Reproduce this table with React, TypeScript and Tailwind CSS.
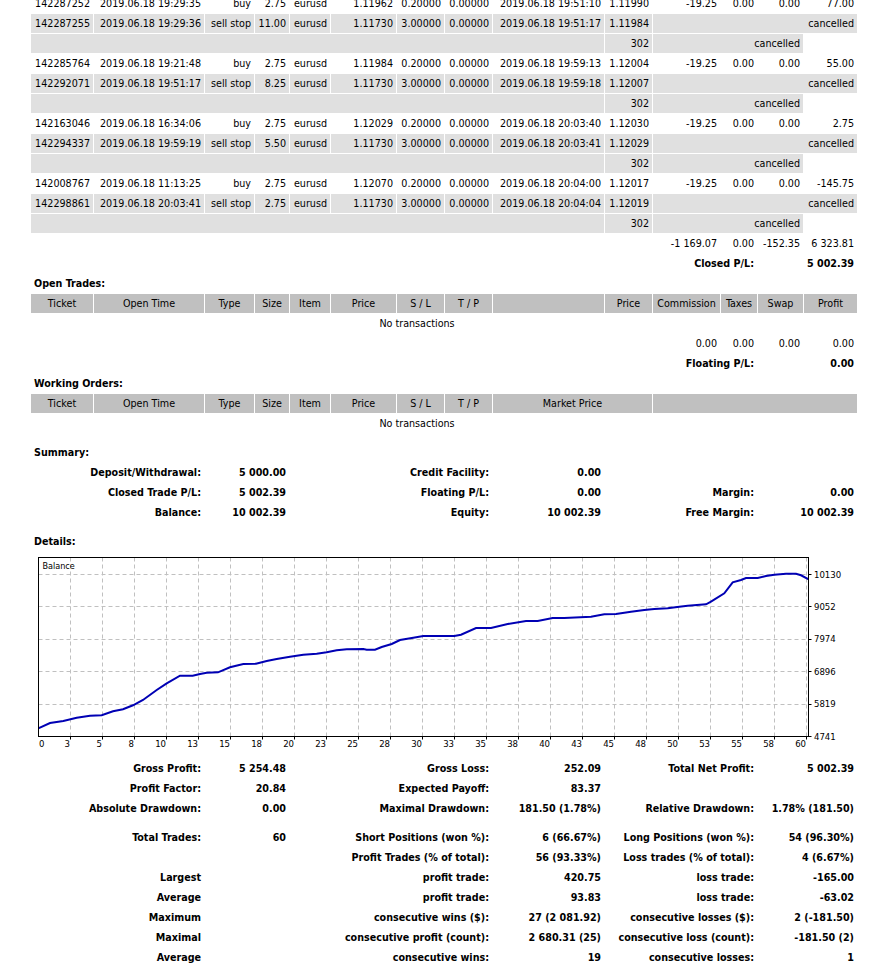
import React from "react"

const cols =
  "grid grid-cols-[62px_110px_49px_34px_40px_65px_47px_47px_111px_47px_67px_36px_45px_53px] gap-x-px h-[19px]"
const base = "px-[3px] whitespace-nowrap leading-[19px]"
const cell = `${base} text-right`
const mid = `${base} text-center`
const shade = "bg-[#E0E0E0]"
const head = `${mid} bg-[#C0C0C0]`

type Pair = {
  buy: string[]
  stop: string[]
}

const pairs: Pair[] = [
  {
    buy: ["142287252", "2019.06.18 19:29:35", "buy", "2.75", "eurusd", "1.11962", "0.20000", "0.00000", "2019.06.18 19:51:10", "1.11990", "-19.25", "0.00", "0.00", "77.00"],
    stop: ["142287255", "2019.06.18 19:29:36", "sell stop", "11.00", "eurusd", "1.11730", "3.00000", "0.00000", "2019.06.18 19:51:17", "1.11984"],
  },
  {
    buy: ["142285764", "2019.06.18 19:21:48", "buy", "2.75", "eurusd", "1.11984", "0.20000", "0.00000", "2019.06.18 19:59:13", "1.12004", "-19.25", "0.00", "0.00", "55.00"],
    stop: ["142292071", "2019.06.18 19:51:17", "sell stop", "8.25", "eurusd", "1.11730", "3.00000", "0.00000", "2019.06.18 19:59:18", "1.12007"],
  },
  {
    buy: ["142163046", "2019.06.18 16:34:06", "buy", "2.75", "eurusd", "1.12029", "0.20000", "0.00000", "2019.06.18 20:03:40", "1.12030", "-19.25", "0.00", "0.00", "2.75"],
    stop: ["142294337", "2019.06.18 19:59:19", "sell stop", "5.50", "eurusd", "1.11730", "3.00000", "0.00000", "2019.06.18 20:03:41", "1.12029"],
  },
  {
    buy: ["142008767", "2019.06.18 11:13:25", "buy", "2.75", "eurusd", "1.12070", "0.20000", "0.00000", "2019.06.18 20:04:00", "1.12017", "-19.25", "0.00", "0.00", "-145.75"],
    stop: ["142298861", "2019.06.18 20:03:41", "sell stop", "2.75", "eurusd", "1.11730", "3.00000", "0.00000", "2019.06.18 20:04:04", "1.12019"],
  },
]

const openHead = ["Ticket", "Open Time", "Type", "Size", "Item", "Price", "S / L", "T / P", "", "Price", "Commission", "Taxes", "Swap", "Profit"]
const orderHead = ["Ticket", "Open Time", "Type", "Size", "Item", "Price", "S / L", "T / P"]

// label, value, label, value, label, value
const summary = [
  ["Deposit/Withdrawal:", "5 000.00", "Credit Facility:", "0.00", "", ""],
  ["Closed Trade P/L:", "5 002.39", "Floating P/L:", "0.00", "Margin:", "0.00"],
  ["Balance:", "10 002.39", "Equity:", "10 002.39", "Free Margin:", "10 002.39"],
]

const stats1 = [
  ["Gross Profit:", "5 254.48", "Gross Loss:", "252.09", "Total Net Profit:", "5 002.39"],
  ["Profit Factor:", "20.84", "Expected Payoff:", "83.37", "", ""],
  ["Absolute Drawdown:", "0.00", "Maximal Drawdown:", "181.50 (1.78%)", "Relative Drawdown:", "1.78% (181.50)"],
]

const stats2 = [
  ["Total Trades:", "60", "Short Positions (won %):", "6 (66.67%)", "Long Positions (won %):", "54 (96.30%)"],
  ["", "", "Profit Trades (% of total):", "56 (93.33%)", "Loss trades (% of total):", "4 (6.67%)"],
  ["Largest", "", "profit trade:", "420.75", "loss trade:", "-165.00"],
  ["Average", "", "profit trade:", "93.83", "loss trade:", "-63.02"],
  ["Maximum", "", "consecutive wins ($):", "27 (2 081.92)", "consecutive losses ($):", "2 (-181.50)"],
  ["Maximal", "", "consecutive profit (count):", "2 680.31 (25)", "consecutive loss (count):", "-181.50 (2)"],
  ["Average", "", "consecutive wins:", "19", "consecutive losses:", "1"],
]

const balance: [number, number][] = [
  [4.3, 173.3], [16, 168], [29.3, 166], [42.7, 162.7], [56, 160.7], [67.7, 160.3], [79, 156.3], [89, 154.3],
  [99, 150.3], [109, 145], [122.7, 135], [132.7, 128.3], [146, 120.7], [158.7, 120.7], [166, 119], [172.7, 117.7],
  [184, 117.3], [196, 112.3], [209.3, 109], [222, 108.7], [232.7, 106], [242.7, 104], [256, 101.7], [269.3, 99.7],
  [282.7, 98.7], [292.7, 97.3], [302.7, 95.3], [312.7, 94.3], [329.3, 94], [332.7, 94.7], [341, 94.7], [347.7, 92],
  [357.7, 89], [366, 85], [379.3, 82.7], [389.3, 81], [420.3, 81], [427, 79.7], [442, 73], [457, 73], [473.7, 69],
  [492, 66], [503.7, 66], [518.7, 63], [530.3, 63], [557, 61.7], [570.3, 59.3], [582, 59], [597, 56.7], [610.3, 55],
  [620.3, 54], [633.7, 53.3], [645.3, 51.7], [653.7, 50.7], [672, 49.3], [677, 46.7], [690.3, 38.3], [698.7, 27.3],
  [707, 25], [712, 23], [723.7, 23], [732, 21], [740.3, 19.7], [752, 18.7], [762, 18.7], [767, 20.3], [774.7, 24.3],
]

const yTicks = ["10130", "9052", "7974", "6896", "5819", "4741"]
const xTicks = ["3", "5", "8", "10", "13", "15", "18", "20", "23", "25", "28", "30", "33", "35", "38", "40", "43", "45", "48", "50", "53", "55", "58", "60"]
const chartFont = "'DejaVu Sans Condensed','Liberation Sans',sans-serif"

function BalanceChart() {
  const left = 4.5
  const top = 2.5
  const right = 774.5
  const bottom = 181.5
  const ys = yTicks.map((_, i) => 19 + i * 32.4)
  return (
    <svg width="820" height="200" viewBox="0 0 820 200" className="block">
      <rect x="0" y="0" width="820" height="200" fill="#ffffff" />
      {xTicks.map((t, i) => {
        const x = 36.5 + i * 32
        return <line key={t + i} x1={x} y1={top} x2={x} y2={bottom} stroke="#C0C0C0" strokeDasharray="4 3" />
      })}
      {ys.slice(0, 5).map((y) => (
        <line key={y} x1={left} y1={Math.round(y) + 0.5} x2={right} y2={Math.round(y) + 0.5} stroke="#C0C0C0" strokeDasharray="4 3" />
      ))}
      <polyline
        points={balance.map(([x, y]) => `${x},${y}`).join(" ")}
        fill="none"
        stroke="#0000B4"
        strokeWidth="2"
      />
      <rect x={left} y={top} width={right - left} height={bottom - top} fill="none" stroke="#000000" />
      {ys.map((y) => (
        <line key={"t" + y} x1={right} y1={Math.round(y) + 0.5} x2={right + 3} y2={Math.round(y) + 0.5} stroke="#000000" />
      ))}
      {xTicks.map((t, i) => {
        const x = 36.5 + i * 32
        return <line key={"b" + t + i} x1={x} y1={bottom} x2={x} y2={bottom + 3} stroke="#000000" />
      })}
      <text x="8.5" y="14" fontSize="9" fill="#000000" fontFamily={chartFont}>
        Balance
      </text>
      {yTicks.map((t, i) => (
        <text key={t} x="780" y={ys[i] + 3.5} fontSize="9.5" fill="#000000" fontFamily={chartFont}>
          {t}
        </text>
      ))}
      <text x="5" y="192" fontSize="9.5" fill="#000000" fontFamily={chartFont}>
        0
      </text>
      {xTicks.map((t, i) => (
        <text key={"l" + t + i} x={36 + i * 32} y="192" fontSize="9.5" textAnchor="end" fill="#000000" fontFamily={chartFont}>
          {t}
        </text>
      ))}
    </svg>
  )
}

function TradeRows({ p }: { p: Pair }) {
  return (
    <>
      <div className={cols}>
        {p.buy.map((v, i) => (
          <div key={i} className={cell}>{v}</div>
        ))}
      </div>
      <div className={cols}>
        {p.stop.map((v, i) => (
          <div key={i} className={`${cell} ${shade}`}>{v}</div>
        ))}
        <div className={`${cell} ${shade} col-span-4`}>cancelled</div>
      </div>
      <div className={cols}>
        <div className={`${cell} ${shade} col-span-9`}></div>
        <div className={`${cell} ${shade}`}>302</div>
        <div className={`${cell} ${shade} col-span-3`}>cancelled</div>
      </div>
    </>
  )
}

function Title({ text }: { text: string }) {
  return (
    <div className={cols}>
      <div className={`${base} col-span-14 font-bold text-left`}>{text}</div>
    </div>
  )
}

function StatRow({ r }: { r: string[] }) {
  return (
    <div className={`${cols} font-bold`}>
      <div className={`${cell} col-span-2`}>{r[0]}</div>
      <div className={`${cell} col-span-2`}>{r[1]}</div>
      <div className={`${cell} col-span-4`}>{r[2]}</div>
      <div className={cell}>{r[3]}</div>
      <div className={`${cell} col-span-3`}>{r[4]}</div>
      <div className={`${cell} col-span-2`}>{r[5]}</div>
    </div>
  )
}

export default function App() {
  return (
    <div className="min-h-screen bg-white text-black text-[10.67px] font-['DejaVu_Sans_Condensed','Liberation_Sans',sans-serif] overflow-hidden">
      <div className="ml-[31px] mt-[-6px] w-[826px] flex flex-col gap-y-px">
        {pairs.map((p, i) => (
          <TradeRows key={i} p={p} />
        ))}
        <div className={cols}>
          <div className="col-span-10"></div>
          <div className={cell}>-1 169.07</div>
          <div className={cell}>0.00</div>
          <div className={cell}>-152.35</div>
          <div className={cell}>6 323.81</div>
        </div>
        <div className={`${cols} font-bold`}>
          <div className={`${cell} col-span-12`}>Closed P/L:</div>
          <div className={`${cell} col-span-2`}>5 002.39</div>
        </div>

        <Title text="Open Trades:" />
        <div className={cols}>
          {openHead.map((h, i) => (
            <div key={i} className={head}>{h}</div>
          ))}
        </div>
        <div className={cols}>
          <div className={`${mid} col-span-13`}>No transactions</div>
        </div>
        <div className={cols}>
          <div className="col-span-10"></div>
          <div className={cell}>0.00</div>
          <div className={cell}>0.00</div>
          <div className={cell}>0.00</div>
          <div className={cell}>0.00</div>
        </div>
        <div className={`${cols} font-bold`}>
          <div className={`${cell} col-span-12`}>Floating P/L:</div>
          <div className={`${cell} col-span-2`}>0.00</div>
        </div>

        <Title text="Working Orders:" />
        <div className={cols}>
          {orderHead.map((h, i) => (
            <div key={i} className={head}>{h}</div>
          ))}
          <div className={`${head} col-span-2`}>Market Price</div>
          <div className={`${head} col-span-4`}></div>
        </div>
        <div className={cols}>
          <div className={`${mid} col-span-13`}>No transactions</div>
        </div>
        <div className="h-[8px]"></div>

        <Title text="Summary:" />
        {summary.map((r, i) => (
          <StatRow key={i} r={r} />
        ))}
        <div className="h-[8px]"></div>

        <Title text="Details:" />
        <div className="p-[3px] h-[206px]">
          <BalanceChart />
        </div>
        {stats1.map((r, i) => (
          <StatRow key={i} r={r} />
        ))}
        <div className="h-[8px]"></div>
        {stats2.map((r, i) => (
          <StatRow key={i} r={r} />
        ))}
      </div>
    </div>
  )
}
